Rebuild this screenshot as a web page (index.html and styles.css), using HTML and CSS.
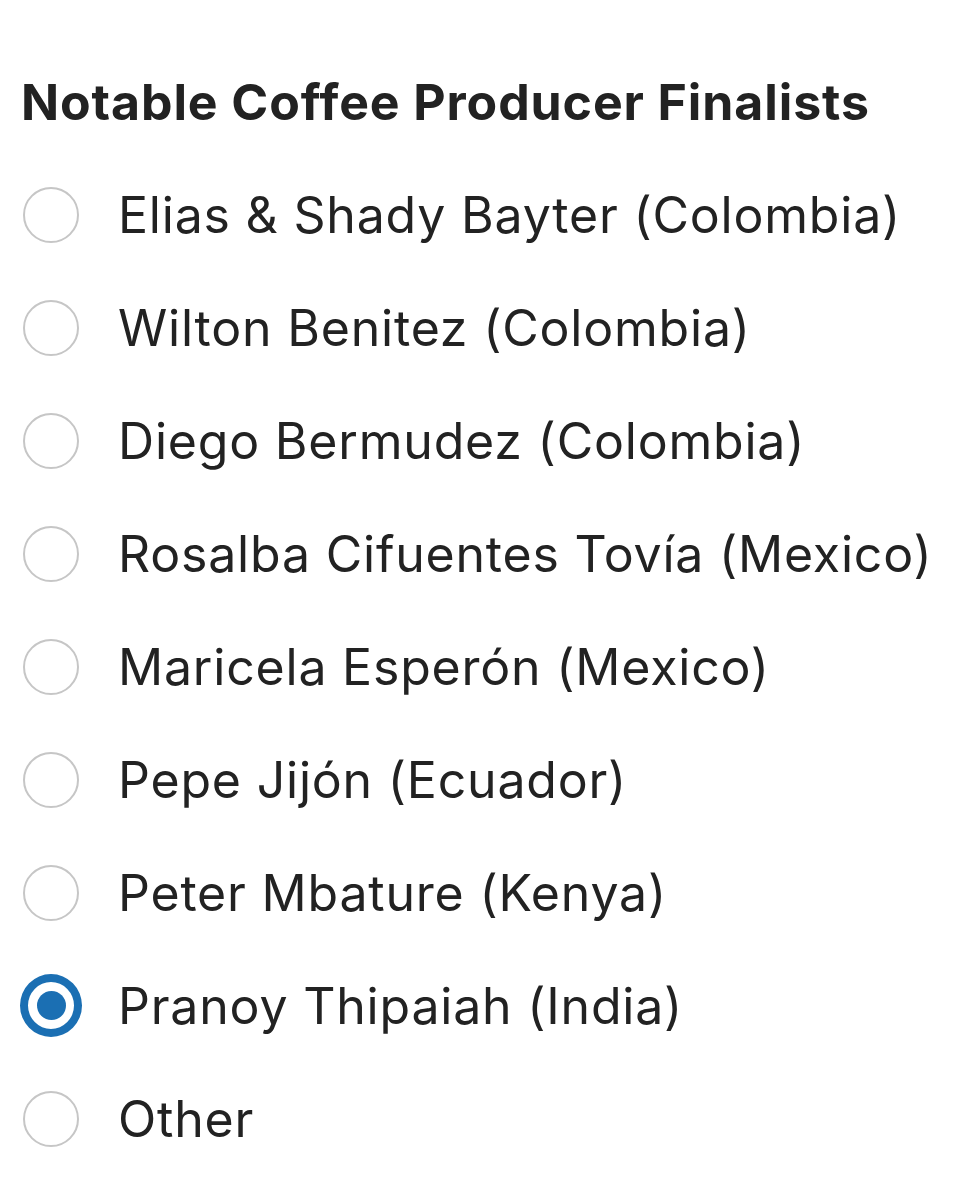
FILE: index.html
```html
<!DOCTYPE html>
<html>
<head>
<meta charset="utf-8">
<link rel="stylesheet" href="styles.css">
</head>
<body>
<div class="form">
  <div class="title">Notable Coffee Producer Finalists</div>
  <label class="option"><span class="radio"><span class="circle"></span></span><span class="label">Elias &amp; Shady Bayter (Colombia)</span></label>
  <label class="option"><span class="radio"><span class="circle"></span></span><span class="label">Wilton Benitez (Colombia)</span></label>
  <label class="option"><span class="radio"><span class="circle"></span></span><span class="label">Diego Bermudez (Colombia)</span></label>
  <label class="option"><span class="radio"><span class="circle"></span></span><span class="label">Rosalba Cifuentes Tovía (Mexico)</span></label>
  <label class="option"><span class="radio"><span class="circle"></span></span><span class="label">Maricela Esperón (Mexico)</span></label>
  <label class="option"><span class="radio"><span class="circle"></span></span><span class="label">Pepe Jijón (Ecuador)</span></label>
  <label class="option"><span class="radio"><span class="circle"></span></span><span class="label">Peter Mbature (Kenya)</span></label>
  <label class="option"><span class="radio"><span class="circle checked"><span class="dot"></span></span></span><span class="label">Pranoy Thipaiah (India)</span></label>
  <label class="option"><span class="radio"><span class="circle"></span></span><span class="label">Other</span></label>
</div>
</body>
</html>
```
FILE: styles.css
```css
html, body {
  margin: 0;
  padding: 0;
  background: #ffffff;
}
body {
  font-family: Inter, "Noto Sans", "Liberation Sans", sans-serif;
  color: #222222;
}
.form {
  padding: 45px 0 0 20px;
}
.title {
  height: 113px;
  display: flex;
  align-items: center;
  padding-left: 1px;
  font-size: 50px;
  font-weight: 700;
  letter-spacing: 0.9px;
  color: #222222;
}
.option {
  height: 113px;
  display: flex;
  align-items: center;
  gap: 36px;
}
.radio {
  width: 62px;
  height: 62px;
  display: flex;
  align-items: center;
  justify-content: center;
  flex: none;
}
.circle {
  box-sizing: border-box;
  width: 56px;
  height: 56px;
  border-radius: 50%;
  border: 2.5px solid #c6c6c6;
  display: flex;
  align-items: center;
  justify-content: center;
}
.circle.checked {
  width: 63px;
  height: 63px;
  border: 8px solid #1b6fb3;
}
.dot {
  width: 29px;
  height: 29px;
  border-radius: 50%;
  background: #1b6fb3;
}
.label {
  font-size: 50px;
  font-weight: 400;
  letter-spacing: 0.8px;
  color: #222222;
}
```
